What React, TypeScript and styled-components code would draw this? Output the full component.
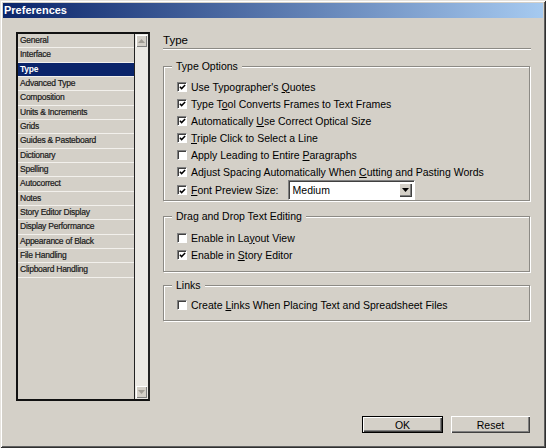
import styled, { createGlobalStyle } from 'styled-components'

const GlobalStyle = createGlobalStyle`
  html, body {
    margin: 0;
    padding: 0;
    background: #d4d0c8;
  }
  * {
    box-sizing: border-box;
  }
`

const categories = [
  'General',
  'Interface',
  'Type',
  'Advanced Type',
  'Composition',
  'Units & Increments',
  'Grids',
  'Guides & Pasteboard',
  'Dictionary',
  'Spelling',
  'Autocorrect',
  'Notes',
  'Story Editor Display',
  'Display Performance',
  'Appearance of Black',
  'File Handling',
  'Clipboard Handling',
]

const Check = ({ checked }: { checked: boolean }) => (
  <Box>
    {checked && (
      <svg width="8" height="8" viewBox="0 0 8 8">
        <path d="M1 3.6 L3 5.8 L7 1.6" fill="none" stroke="#000" strokeWidth="1.7" />
      </svg>
    )}
  </Box>
)

const Option = ({ checked, children }: { checked: boolean; children: React.ReactNode }) => (
  <Row>
    <Check checked={checked} />
    <Label>{children}</Label>
  </Row>
)

const App = () => {
  return (
    <Window>
      <GlobalStyle />
      <TitleBar>Preferences</TitleBar>
      <Body>
        <ListBox>
          <Items>
            {categories.map((c) => (
              <Item key={c} $active={c === 'Type'}>
                {c}
              </Item>
            ))}
          </Items>
          <ScrollBar>
            <ArrowButton>
              <svg width="7" height="4" viewBox="0 0 7 4">
                <path d="M0 4 L3.5 0 L7 4 Z" fill="#a09c94" />
              </svg>
            </ArrowButton>
            <Track />
            <ArrowButton>
              <svg width="7" height="4" viewBox="0 0 7 4">
                <path d="M0 0 L3.5 4 L7 0 Z" fill="#a09c94" />
              </svg>
            </ArrowButton>
          </ScrollBar>
        </ListBox>

        <Panel>
          <Heading>Type</Heading>

          <Group $pt={11} $pb={0} $mb={15}>
            <Legend>Type Options</Legend>
            <Option checked>
              Use Typographer's <u>Q</u>uotes
            </Option>
            <Option checked>
              Type T<u>o</u>ol Converts Frames to Text Frames
            </Option>
            <Option checked>
              Automatically <u>U</u>se Correct Optical Size
            </Option>
            <Option checked>
              <u>T</u>riple Click to Select a Line
            </Option>
            <Option checked={false}>
              Apply Leading to Entire <u>P</u>aragraphs
            </Option>
            <Option checked>
              Adjust Spacing Automatically When <u>C</u>utting and Pasting Words
            </Option>
            <SelectRow>
              <Check checked />
              <Label>
                <u>F</u>ont Preview Size:
              </Label>
              <Select>
                <span>Medium</span>
                <DropButton>
                  <svg width="7" height="4" viewBox="0 0 7 4">
                    <path d="M0 0 L3.5 4 L7 0 Z" fill="#000" />
                  </svg>
                </DropButton>
              </Select>
            </SelectRow>
          </Group>

          <Group $pt={12} $pb={8} $mb={13}>
            <Legend>Drag and Drop Text Editing</Legend>
            <Option checked={false}>
              Enable in La<u>y</u>out View
            </Option>
            <Option checked>
              Enable in <u>S</u>tory Editor
            </Option>
          </Group>

          <Group $pt={10} $pb={7} $mb={0}>
            <Legend>Links</Legend>
            <Option checked={false}>
              Create <u>L</u>inks When Placing Text and Spreadsheet Files
            </Option>
          </Group>
        </Panel>
      </Body>

      <Footer>
        <Button $default>OK</Button>
        <Button>Reset</Button>
      </Footer>
    </Window>
  )
}

const Window = styled.div`
  width: 546px;
  height: 448px;
  padding: 3px;
  background: #d4d0c8;
  font-family: 'Liberation Sans', Arial, sans-serif;
  color: #000;
  display: flex;
  flex-direction: column;
  box-shadow: inset 1px 1px 0 #e6e3de, inset -1px -1px 0 #303030, inset 2px 2px 0 #ffffff,
    inset -2px -2px 0 #606060;
`

const TitleBar = styled.div`
  height: 15px;
  padding-left: 1px;
  background: linear-gradient(to right, #0a246a, #a6caf0);
  color: #fff;
  font-weight: bold;
  font-size: 11px;
  line-height: 15px;
`

const Body = styled.div`
  display: flex;
  padding: 14px 12px 0 13px;
  gap: 13px;
`

const ListBox = styled.div`
  width: 134px;
  height: 369px;
  display: flex;
  border: 2px solid #111;
  border-right-color: #222;
  background: #d4d0c8;
`

const Items = styled.div`
  flex: 1;
  border-right: 1px solid #222;
`

const Item = styled.div<{ $active?: boolean }>`
  height: 14.33px;
  padding-left: 2px;
  border-bottom: 1px solid #f2f0ec;
  font-size: 8.5px;
  letter-spacing: -0.25px;
  line-height: 13px;
  white-space: nowrap;
  color: ${(p) => (p.$active ? '#fff' : '#1a1a1a')};
  background: ${(p) => (p.$active ? '#0a246a' : 'transparent')};
  font-weight: ${(p) => (p.$active ? 'bold' : 'normal')};
  -webkit-text-stroke: ${(p) => (p.$active ? '0' : '0.2px #1a1a1a')};
`

const ScrollBar = styled.div`
  width: 13px;
  display: flex;
  flex-direction: column;
  background: #ebe9e4;
`

const Track = styled.div`
  flex: 1;
`

const ArrowButton = styled.div`
  height: 12px;
  margin: 1px 1px;
  display: flex;
  align-items: center;
  justify-content: center;
  background: #d4d0c8;
  box-shadow: inset 1px 1px 0 #fff, inset -1px -1px 0 #808080;
`

const Panel = styled.div`
  width: 368px;
  display: flex;
  flex-direction: column;
`

const Heading = styled.div`
  height: 17px;
  padding-top: 1px;
  font-size: 11.5px;
  line-height: 14px;
  border-bottom: 1px solid #8c8a85;
  box-shadow: 0 1px 0 #fff;
  margin-bottom: 17px;
`

const Group = styled.div<{ $pt: number; $pb: number; $mb: number }>`
  position: relative;
  width: 367px;
  padding: ${(p) => p.$pt}px 0 ${(p) => p.$pb}px 13px;
  margin-bottom: ${(p) => p.$mb}px;
  border: 1px solid #8c8a85;
  box-shadow: 1px 1px 0 #fff, inset 1px 1px 0 #fff;
`

const Legend = styled.span`
  position: absolute;
  top: -8px;
  left: 8px;
  padding: 0 4px;
  background: #d4d0c8;
  font-size: 10.5px;
  line-height: 14px;
`

const Row = styled.div`
  height: 17px;
  display: flex;
  align-items: center;
  gap: 4px;
`

const SelectRow = styled(Row)`
  height: 20px;
`

const Box = styled.div`
  width: 10px;
  height: 10px;
  flex: none;
  display: flex;
  align-items: center;
  justify-content: center;
  background: #fff;
  border: 1px solid;
  border-color: #808080 #fff #fff #808080;
  box-shadow: inset 1px 1px 0 #404040;
  padding: 1px 0 0 1px;
`

const Label = styled.span`
  font-size: 10.5px;
  white-space: nowrap;
`

const Select = styled.div`
  width: 127px;
  height: 20px;
  margin-left: 5px;
  display: flex;
  align-items: center;
  justify-content: space-between;
  padding: 2px 2px 2px 4px;
  background: #fff;
  border: 1px solid;
  border-color: #808080 #fff #fff #808080;
  box-shadow: inset 1px 1px 0 #404040;
  font-size: 10.5px;
`

const DropButton = styled.div`
  width: 13px;
  height: 14px;
  display: flex;
  align-items: center;
  justify-content: center;
  background: #d4d0c8;
  box-shadow: inset 1px 1px 0 #fff, inset -1px -1px 0 #404040, inset -2px -2px 0 #808080;
`

const Footer = styled.div`
  display: flex;
  justify-content: flex-end;
  gap: 8px;
  margin-top: auto;
  padding: 0 13px 12px 0;
`

const Button = styled.div<{ $default?: boolean }>`
  width: ${(p) => (p.$default ? '81px' : '79px')};
  height: 17px;
  display: flex;
  align-items: center;
  justify-content: center;
  font-size: 10.5px;
  background: #d4d0c8;
  border: ${(p) => (p.$default ? '1px solid #000' : 'none')};
  box-shadow: inset 1px 1px 0 #fff, inset -1px -1px 0 #404040, inset -2px -2px 0 #808080;
`

export default App
